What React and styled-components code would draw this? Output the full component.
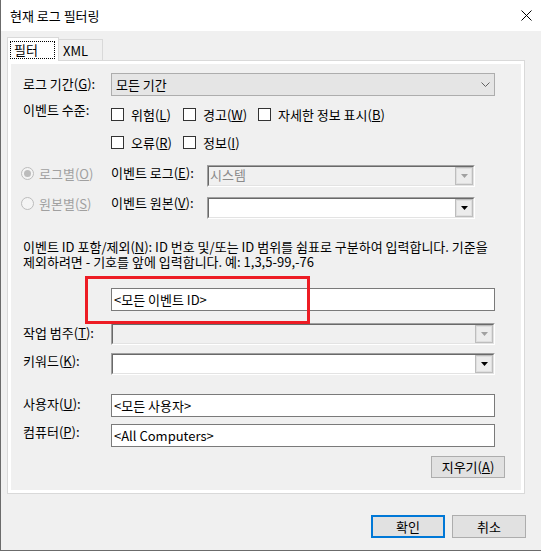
import React from "react";
import styled, { createGlobalStyle } from "styled-components";

const GlobalStyle = createGlobalStyle`
  html, body {
    margin: 0;
    padding: 0;
    background: #f0f0f0;
  }
  body {
    font-family: "Noto Sans CJK KR", "Noto Sans", sans-serif;
    font-size: 13px;
    color: #000;
  }
  * {
    box-sizing: border-box;
  }
`;

const Window = styled.div`
  position: relative;
  width: 541px;
  height: 551px;
  background: #f0f0f0;
  border-left: 1px solid #6b6b6b;
  border-bottom: 1px solid #6b6b6b;
  display: flex;
  flex-direction: column;
  overflow: hidden;
`;

const TitleBar = styled.div`
  height: 31px;
  flex: none;
  background: #fff;
  display: flex;
  align-items: center;
  justify-content: space-between;
  padding: 0 9px;
`;

const Title = styled.div`
  line-height: 16px;
`;

const Body = styled.div`
  padding-left: 6px;
  display: flex;
  flex-direction: column;
`;

const TabStrip = styled.div`
  position: relative;
  z-index: 1;
  margin-top: 6px;
  margin-bottom: -1px;
  height: 24px;
  display: flex;
  align-items: flex-end;
`;

const Tab = styled.div`
  height: ${(p) => (p.$active ? 24 : 21)}px;
  width: ${(p) => (p.$active ? 52 : 45)}px;
  margin-left: ${(p) => (p.$active ? 0 : -1)}px;
  margin-bottom: ${(p) => (p.$active ? 0 : 1)}px;
  background: ${(p) => (p.$active ? "#fff" : "#f0f0f0")};
  border: 1px solid #d9d9d9;
  border-bottom: none;
  padding: ${(p) => (p.$active ? "3px 0 0 2px" : "3px 0 0 4px")};
  line-height: 16px;
`;

const FocusRing = styled.div`
  width: 45px;
  height: 18px;
  border: 1px dotted #000;
  padding-left: 3px;
  line-height: 16px;
`;

const Panel = styled.div`
  width: 518px;
  height: 434px;
  border: 1px solid #d9d9d9;
  background: #fff;
  padding: 3px;
`;

const Page = styled.div`
  height: 100%;
  background: #f0f0f0;
  padding: 0 16px 0 12px;
  display: flex;
  flex-direction: column;
`;

const Row = styled.div`
  display: flex;
  align-items: flex-start;
  flex: none;
  height: ${(p) => p.$h || 22}px;
  margin-top: ${(p) => p.$mt || 0}px;
  margin-left: ${(p) => p.$ml || 0}px;
  padding-left: ${(p) => p.$indent || 0}px;
`;

const Label = styled.div`
  width: ${(p) => p.$w || 88}px;
  flex: none;
  line-height: 16px;
  margin-top: ${(p) => p.$dy || 0}px;
  white-space: nowrap;
  color: ${(p) => (p.$muted ? "#a0a0a0" : "#000")};
`;

const FlatSelect = styled.div`
  width: 384px;
  height: 23px;
  background: #e5e5e5;
  border: 1px solid #adadad;
  display: flex;
  align-items: center;
  justify-content: space-between;
  padding: 0 4px 0 4px;
  line-height: 16px;
`;

const CheckItem = styled.div`
  width: ${(p) => p.$w || "auto"}px;
  height: 22px;
  display: flex;
  align-items: center;
  gap: 7px;
  white-space: nowrap;
`;

const CheckBox = styled.span`
  width: 13px;
  height: 13px;
  flex: none;
  border: 1px solid #333;
  background: #fff;
`;

const RadioItem = styled.div`
  width: 90px;
  flex: none;
  display: flex;
  align-items: center;
  gap: 5px;
  height: 16px;
  margin-top: ${(p) => p.$dy || 0}px;
  color: #a0a0a0;
  white-space: nowrap;
`;

const RadioCircle = styled.span`
  width: 13px;
  height: 13px;
  flex: none;
  border-radius: 50%;
  border: 1px solid #bcbcbc;
  background: #f4f4f4;
  display: flex;
  align-items: center;
  justify-content: center;

  &::after {
    content: "";
    display: ${(p) => (p.$checked ? "block" : "none")};
    width: 7px;
    height: 7px;
    border-radius: 50%;
    background: #bcbcbc;
  }
`;

const ClassicCombo = styled.div`
  width: ${(p) => p.$w}px;
  height: 22px;
  flex: none;
  display: flex;
  border-top: 1px solid #a0a0a0;
  border-left: 1px solid #a0a0a0;
  border-right: 1px solid #fff;
  border-bottom: 1px solid #fff;
`;

const ClassicInner = styled.div`
  flex: 1;
  display: flex;
  align-items: flex-start;
  border-top: 1px solid #696969;
  border-left: 1px solid #696969;
  border-right: 1px solid #e3e3e3;
  border-bottom: 1px solid #e3e3e3;
  background: ${(p) => (p.$disabled ? "#f0f0f0" : "#fff")};
`;

const ComboText = styled.div`
  flex: 1;
  padding-left: 1px;
  line-height: 16px;
  color: #8a8a8a;
`;

const DropButton = styled.div`
  width: 18px;
  height: 100%;
  flex: none;
  margin-left: auto;
  border: 1px solid #bdbdbd;
  box-shadow: inset 0 0 0 1px #dedede;
  background: #ececec;
  display: flex;
  align-items: center;
  justify-content: center;
`;

const HelpText = styled.div`
  margin-top: ${(p) => p.$mt || 0}px;
  line-height: 15px;
  white-space: nowrap;
`;

const TextBox = styled.div`
  width: 384px;
  height: 23px;
  flex: none;
  border: 1px solid #7a7a7a;
  background: #fff;
  padding-left: 2px;
  display: flex;
  align-items: center;
  line-height: 16px;
  white-space: nowrap;
`;

const Button = styled.div`
  width: 74px;
  height: ${(p) => p.$h || 23}px;
  flex: none;
  display: flex;
  align-items: center;
  justify-content: center;
  background: #e1e1e1;
  border: ${(p) => (p.$primary ? "2px solid #0078d7" : "1px solid #adadad")};
  line-height: 16px;
`;

const ClearRow = styled.div`
  display: flex;
  justify-content: flex-end;
  margin-top: 9px;
`;

const Footer = styled.div`
  display: flex;
  justify-content: flex-end;
  gap: 7px;
  padding-right: 15px;
  margin-top: 21px;
`;

const Highlight = styled.div`
  position: absolute;
  left: 84px;
  top: 276px;
  width: 225px;
  height: 48px;
  border: 3px solid #ed1c24;
  pointer-events: none;
`;

const CloseIcon = () => (
  <svg width="11" height="11" viewBox="0 0 11 11">
    <path d="M0.5 0.5 L10.5 10.5 M10.5 0.5 L0.5 10.5" stroke="#000" strokeWidth="1" />
  </svg>
);

const Chevron = () => (
  <svg width="9" height="5" viewBox="0 0 9 5">
    <path d="M0.5 0.5 L4.5 4.5 L8.5 0.5" stroke="#606060" strokeWidth="1" fill="none" />
  </svg>
);

const Triangle = ({ disabled }) => (
  <svg width="7" height="4" viewBox="0 0 7 4">
    <polygon points="0,0 7,0 3.5,4" fill={disabled ? "#a0a0a0" : "#000"} />
  </svg>
);

const Combo = ({ width, disabled, text }) => (
  <ClassicCombo $w={width}>
    <ClassicInner $disabled={disabled}>
      <ComboText>{text}</ComboText>
      <DropButton>
        <Triangle disabled={disabled} />
      </DropButton>
    </ClassicInner>
  </ClassicCombo>
);

const Check = ({ width, children }) => (
  <CheckItem $w={width}>
    <CheckBox />
    <span>{children}</span>
  </CheckItem>
);

export default function App() {
  return (
    <>
      <GlobalStyle />
      <Window>
        <TitleBar>
          <Title>현재 로그 필터링</Title>
          <CloseIcon />
        </TitleBar>

        <Body>
          <TabStrip>
            <Tab $active>
              <FocusRing>필터</FocusRing>
            </Tab>
            <Tab>XML</Tab>
          </TabStrip>

          <Panel>
            <Page>
              <Row $mt={9} $h={23}>
                <Label $dy={3}>
                  로그 기간(<u>G</u>):
                </Label>
                <FlatSelect>
                  <span>모든 기간</span>
                  <Chevron />
                </FlatSelect>
              </Row>

              <Row $mt={7}>
                <Label $dy={-1}>이벤트 수준:</Label>
                <Check width={72}>
                  위험(<u>L</u>)
                </Check>
                <Check width={75}>
                  경고(<u>W</u>)
                </Check>
                <Check>
                  자세한 정보 표시(<u>B</u>)
                </Check>
              </Row>

              <Row $mt={6} $indent={88}>
                <Check width={72}>
                  오류(<u>R</u>)
                </Check>
                <Check width={75}>
                  정보(<u>I</u>)
                </Check>
              </Row>

              <Row $mt={12} $ml={-2}>
                <RadioItem>
                  <RadioCircle $checked />
                  <span>
                    로그별(<u>O</u>)
                  </span>
                </RadioItem>
                <Label $w={96}>
                  이벤트 로그(<u>E</u>):
                </Label>
                <Combo width={268} disabled text="시스템" />
              </Row>

              <Row $mt={10} $ml={-2}>
                <RadioItem $dy={-2}>
                  <RadioCircle />
                  <span>
                    원본별(<u>S</u>)
                  </span>
                </RadioItem>
                <Label $w={96} $dy={-2}>
                  이벤트 원본(<u>V</u>):
                </Label>
                <Combo width={268} />
              </Row>

              <HelpText $mt={20}>
                이벤트 ID 포함/제외(<u>N</u>): ID 번호 및/또는 ID 범위를 쉼표로 구분하여 입력합니다. 기준을
                <br />
                제외하려면 - 기호를 앞에 입력합니다. 예: 1,3,5-99,-76
              </HelpText>

              <Row $mt={19} $h={23} $indent={88}>
                <TextBox>&lt;모든 이벤트 ID&gt;</TextBox>
              </Row>

              <Row $mt={12}>
                <Label $dy={2}>
                  작업 범주(<u>T</u>):
                </Label>
                <Combo width={384} disabled />
              </Row>

              <Row $mt={8}>
                <Label>
                  키워드(<u>K</u>):
                </Label>
                <Combo width={384} />
              </Row>

              <Row $mt={19} $h={23}>
                <Label $dy={2}>
                  사용자(<u>U</u>):
                </Label>
                <TextBox>&lt;모든 사용자&gt;</TextBox>
              </Row>

              <Row $mt={7} $h={23}>
                <Label>
                  컴퓨터(<u>P</u>):
                </Label>
                <TextBox>&lt;All Computers&gt;</TextBox>
              </Row>

              <ClearRow>
                <Button $h={22}>
                  지우기(<u>A</u>)
                </Button>
              </ClearRow>
            </Page>
          </Panel>

          <Footer>
            <Button $primary>확인</Button>
            <Button>취소</Button>
          </Footer>
        </Body>

        <Highlight />
      </Window>
    </>
  );
}
